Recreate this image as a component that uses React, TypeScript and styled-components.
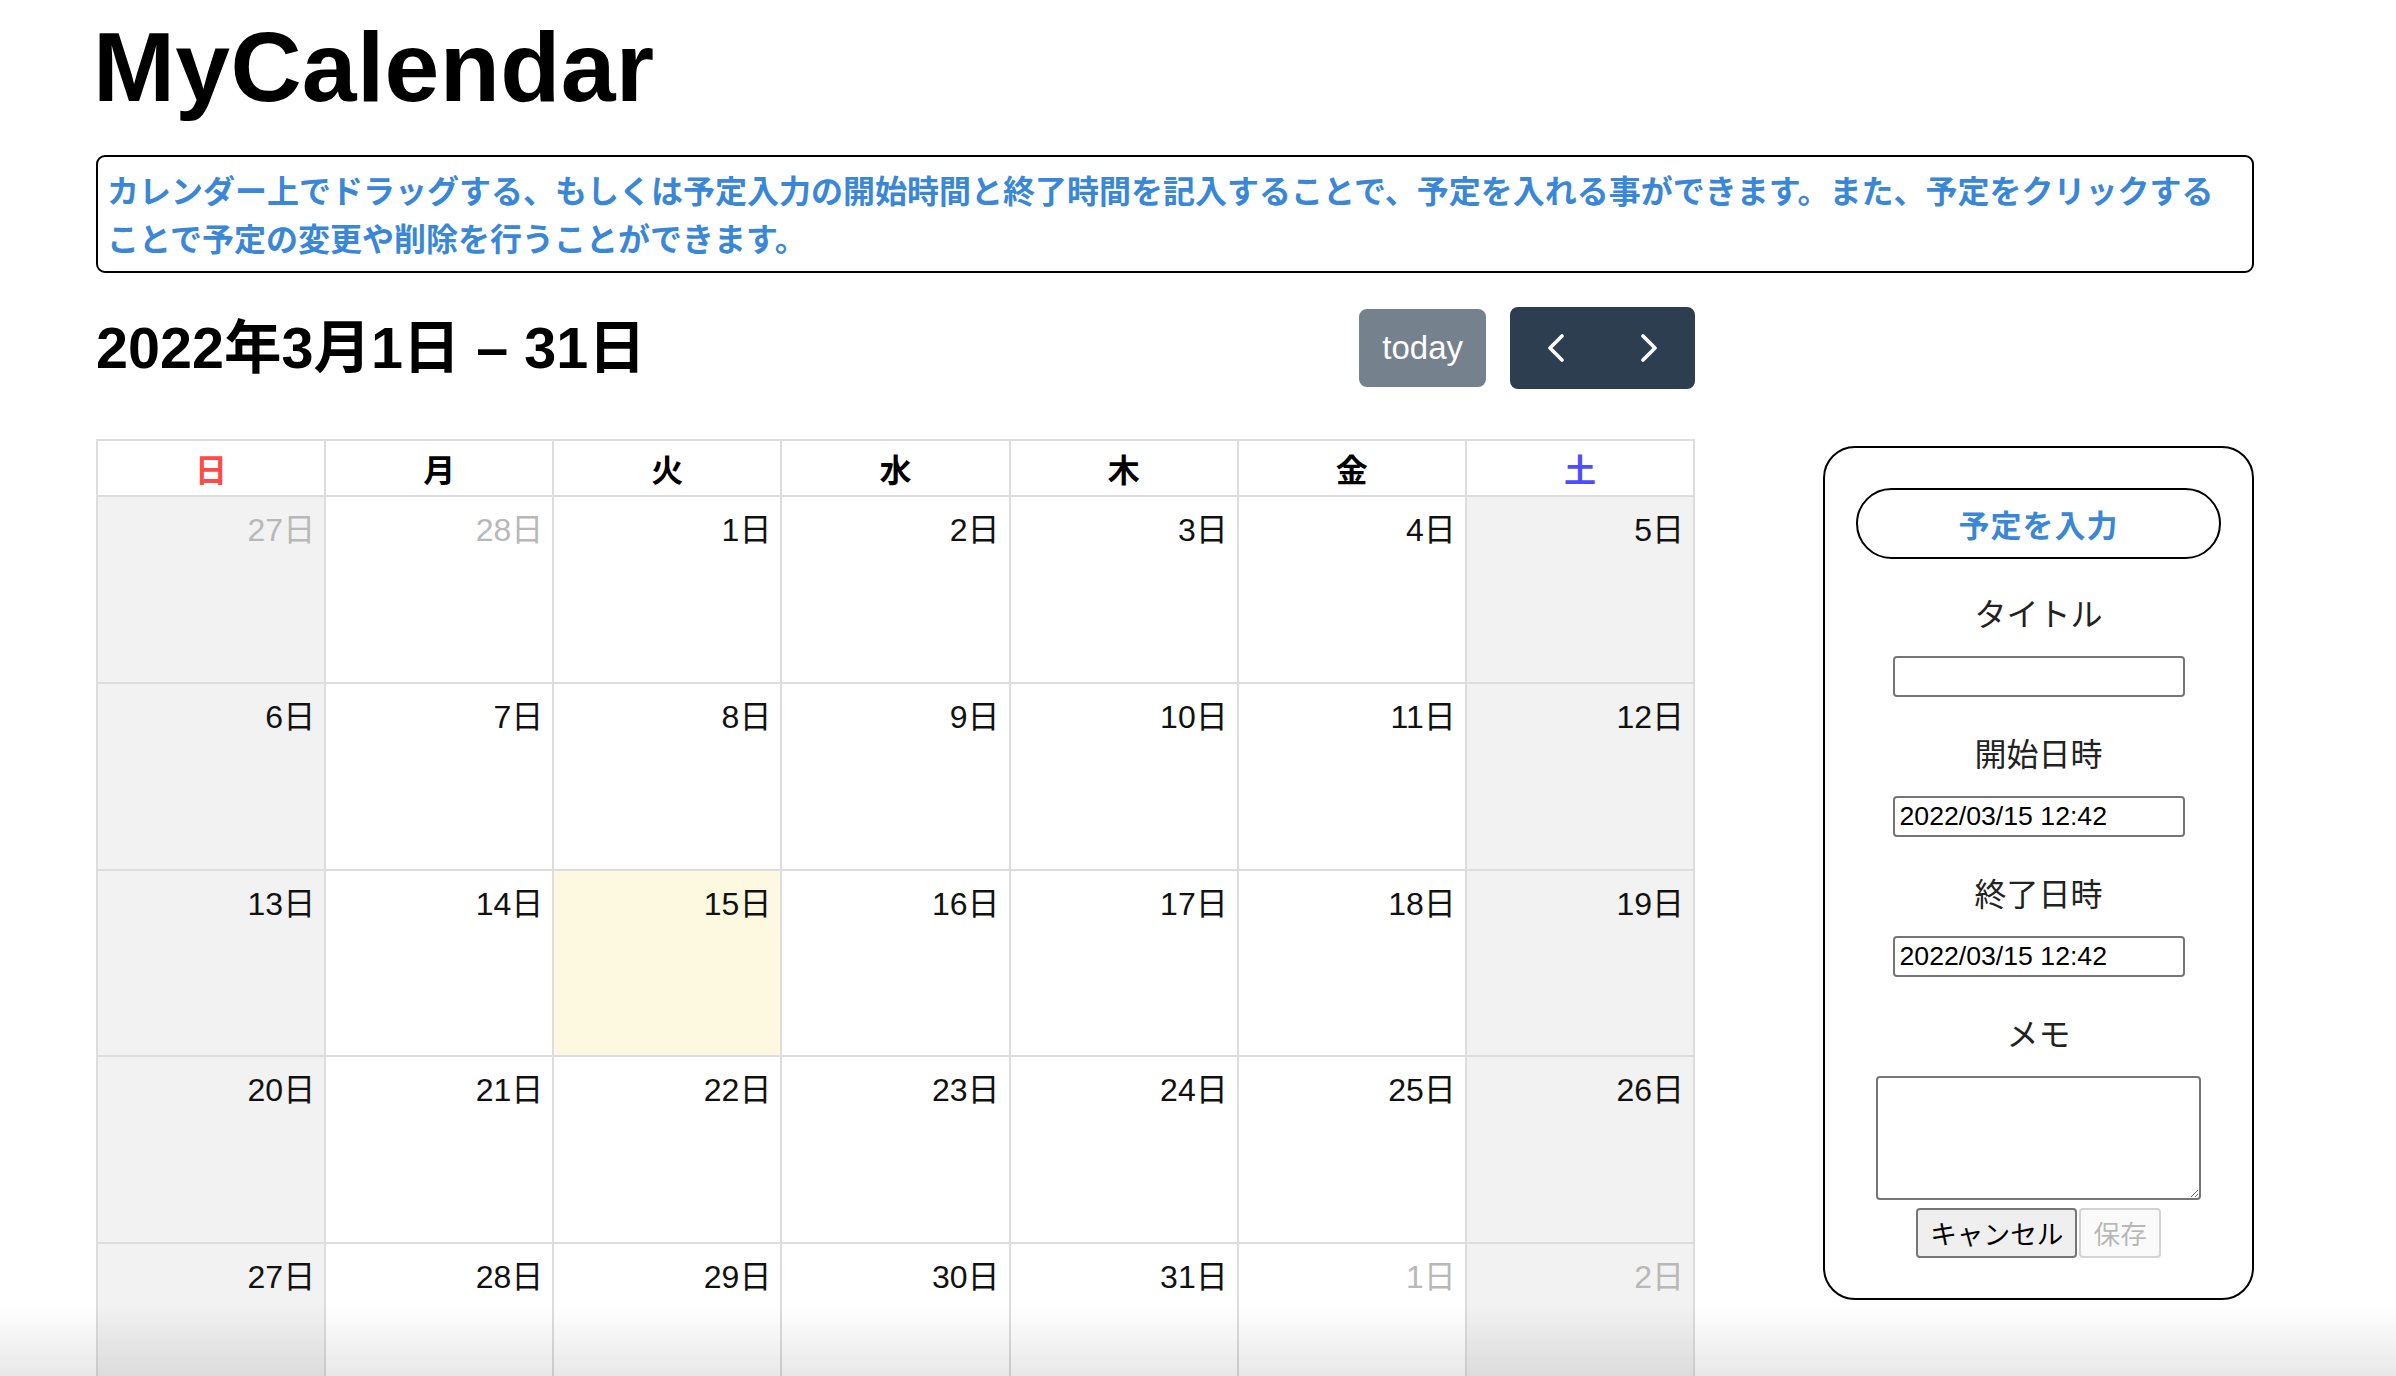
import React from "react";
import styled, { createGlobalStyle } from "styled-components";

const GlobalStyle = createGlobalStyle`
  html, body {
    margin: 0;
    padding: 0;
    background: #ffffff;
  }
  body {
    font-family: "Liberation Sans", "Noto Sans CJK JP", sans-serif;
    color: #000;
  }
  * { box-sizing: border-box; }
`;

const Page = styled.div`
  height: 100vh;
  overflow: hidden;
  padding: 18px 142px 0 96px;
`;

const AppTitle = styled.h1`
  margin: 0 0 0 -3px;
  font-family: "Liberation Sans", sans-serif;
  font-weight: 700;
  font-size: 98.5px;
  line-height: 98px;
  letter-spacing: 0.3px;
  color: #000;
`;

const Notice = styled.div`
  margin-top: 39px;
  border: 2px solid #000;
  border-radius: 9px;
  padding: 8px 9px 10px;
  font-family: "Noto Sans CJK JP", sans-serif;
  font-weight: 700;
  font-size: 32px;
  line-height: 48px;
  color: #3a87d7;
`;

const MainRow = styled.div`
  display: flex;
  align-items: flex-start;
  gap: 128px;
  margin-top: 34px;
`;

const CalendarColumn = styled.section`
  width: 1599px;
  flex: none;
`;

const Toolbar = styled.div`
  display: flex;
  align-items: center;
  justify-content: space-between;
  height: 82px;
  margin-bottom: 50px;
`;

const RangeTitle = styled.h2`
  margin: 0;
  font-family: "Liberation Sans", "Noto Sans CJK JP", sans-serif;
  font-weight: 700;
  font-size: 57.5px;
  line-height: 67px;
`;

const ToolbarButtons = styled.div`
  display: flex;
  align-items: center;
  gap: 24px;
`;

const TodayButton = styled.button`
  height: 78px;
  padding: 0 21px;
  border: 2px solid #2c3e50;
  border-radius: 8px;
  background: #2c3e50;
  opacity: 0.65;
  color: #fff;
  font-family: "Liberation Sans", sans-serif;
  font-size: 33px;
  line-height: 48px;
`;

const NavGroup = styled.div`
  display: flex;
`;

const NavButton = styled.button<{ $side: "left" | "right" }>`
  width: 92.5px;
  height: 82px;
  display: flex;
  align-items: center;
  justify-content: center;
  border: 2px solid #2c3e50;
  background: #2c3e50;
  padding: 0;
  border-radius: ${(p) => (p.$side === "left" ? "8px 0 0 8px" : "0 8px 8px 0")};
`;

const Grid = styled.div`
  display: grid;
  grid-template-columns: repeat(7, 1fr);
  border-top: 2px solid #ddd;
  border-left: 2px solid #ddd;
`;

const HeadCell = styled.div<{ $color: string }>`
  height: 56px;
  display: flex;
  align-items: center;
  justify-content: center;
  border-right: 2px solid #ddd;
  border-bottom: 2px solid #ddd;
  font-family: "Noto Sans CJK JP", sans-serif;
  font-weight: 700;
  font-size: 32px;
  line-height: 48px;
  color: ${(p) => p.$color};
`;

const DayCell = styled.div<{ $bg: string }>`
  height: 186.75px;
  border-right: 2px solid #ddd;
  border-bottom: 2px solid #ddd;
  background: ${(p) => p.$bg};
  display: flex;
  justify-content: flex-end;
  align-items: flex-start;
`;

const DayNumber = styled.span<{ $muted: boolean }>`
  padding: 9px 9px 7px;
  font-family: "Liberation Sans", "Noto Sans CJK JP", sans-serif;
  font-size: 32px;
  line-height: 48px;
  color: ${(p) => (p.$muted ? "#b8b8b8" : "#111")};
`;

const Panel = styled.aside`
  width: 431px;
  flex: none;
  margin-top: 139px;
  border: 2px solid #000;
  border-radius: 32px;
  padding: 40px 31px;
  display: flex;
  flex-direction: column;
  align-items: center;
`;

const EntryButton = styled.button`
  width: 100%;
  height: 71px;
  border: 2px solid #000;
  border-radius: 36px;
  background: #fff;
  color: #3a87d7;
  font-family: "Noto Sans CJK JP", sans-serif;
  font-weight: 700;
  font-size: 31px;
  letter-spacing: 1px;
`;

const FieldLabel = styled.div<{ $top: number }>`
  margin-top: ${(p) => p.$top}px;
  margin-bottom: 20px;
  font-family: "Noto Sans CJK JP", sans-serif;
  font-size: 32px;
  line-height: 48px;
  color: #222;
`;

const TextField = styled.input`
  width: 292px;
  height: 41px;
  border: 2px solid #767676;
  border-radius: 4px;
  padding: 2px 5px;
  font-family: "Liberation Sans", sans-serif;
  font-size: 26.67px;
  color: #000;
  background: #fff;
`;

const MemoField = styled.textarea`
  width: 325px;
  height: 124px;
  margin-top: 0;
  border: 2px solid #767676;
  border-radius: 4px;
  padding: 4px;
  font-family: "Liberation Sans", sans-serif;
  font-size: 26.67px;
  background: #fff;
  resize: both;
`;

const ActionRow = styled.div`
  display: flex;
  gap: 2px;
  margin-top: 8px;
`;

const FormButton = styled.button`
  height: 50px;
  padding: 0 12px;
  border: 2px solid #767676;
  border-radius: 4px;
  background: #efefef;
  color: #000;
  font-family: "Noto Sans CJK JP", sans-serif;
  font-size: 26.67px;
  line-height: 1;
  &:disabled {
    border-color: rgba(118, 118, 118, 0.3);
    background: rgba(239, 239, 239, 0.3);
    color: rgba(16, 16, 16, 0.3);
  }
`;

const BottomFade = styled.div`
  position: fixed;
  left: 0;
  right: 0;
  bottom: 0;
  height: 72px;
  pointer-events: none;
  background: linear-gradient(to bottom, rgba(0, 0, 0, 0), rgba(0, 0, 0, 0.09));
`;

const Chevron = ({ dir }: { dir: "left" | "right" }) => (
  <svg width="18" height="28" viewBox="0 0 18 28" fill="none">
    <polyline
      points={dir === "left" ? "15,2 3,14 15,26" : "3,2 15,14 3,26"}
      stroke="#fff"
      strokeWidth="3.6"
      strokeLinecap="round"
      strokeLinejoin="round"
    />
  </svg>
);

const weekdays = [
  { label: "日", color: "#ff4a4a" },
  { label: "月", color: "#000" },
  { label: "火", color: "#000" },
  { label: "水", color: "#000" },
  { label: "木", color: "#000" },
  { label: "金", color: "#000" },
  { label: "土", color: "#4d4dff" },
];

type Day = { n: number; muted: boolean; today?: boolean };

const buildWeeks = (): Day[][] => {
  const days: Day[] = [
    { n: 27, muted: true },
    { n: 28, muted: true },
  ];
  for (let i = 1; i <= 31; i++) days.push({ n: i, muted: false, today: i === 15 });
  for (let i = 1; i <= 2; i++) days.push({ n: i, muted: true });
  const weeks: Day[][] = [];
  for (let w = 0; w < 5; w++) weeks.push(days.slice(w * 7, w * 7 + 7));
  return weeks;
};

export default function App() {
  const weeks = buildWeeks();
  return (
    <>
      <GlobalStyle />
      <Page>
        <AppTitle>MyCalendar</AppTitle>
        <Notice>
          カレンダー上でドラッグする、もしくは予定入力の開始時間と終了時間を記入することで、予定を入れる事ができます。また、予定をクリックすることで予定の変更や削除を行うことができます。
        </Notice>
        <MainRow>
          <CalendarColumn>
            <Toolbar>
              <RangeTitle>2022年3月1日 – 31日</RangeTitle>
              <ToolbarButtons>
                <TodayButton disabled>today</TodayButton>
                <NavGroup>
                  <NavButton $side="left" aria-label="prev">
                    <Chevron dir="left" />
                  </NavButton>
                  <NavButton $side="right" aria-label="next">
                    <Chevron dir="right" />
                  </NavButton>
                </NavGroup>
              </ToolbarButtons>
            </Toolbar>
            <Grid>
              {weekdays.map((d) => (
                <HeadCell key={d.label} $color={d.color}>
                  {d.label}
                </HeadCell>
              ))}
              {weeks.map((week, wi) =>
                week.map((day, di) => {
                  const weekend = di === 0 || di === 6;
                  const bg = day.today ? "#fdf9e0" : weekend ? "#f2f2f2" : "#ffffff";
                  return (
                    <DayCell key={`${wi}-${di}`} $bg={bg}>
                      <DayNumber $muted={day.muted}>{day.n}日</DayNumber>
                    </DayCell>
                  );
                })
              )}
            </Grid>
          </CalendarColumn>
          <Panel>
            <EntryButton>予定を入力</EntryButton>
            <FieldLabel $top={29}>タイトル</FieldLabel>
            <TextField type="text" defaultValue="" />
            <FieldLabel $top={31}>開始日時</FieldLabel>
            <TextField type="text" defaultValue="2022/03/15 12:42" />
            <FieldLabel $top={31}>終了日時</FieldLabel>
            <TextField type="text" defaultValue="2022/03/15 12:42" />
            <FieldLabel $top={31}>メモ</FieldLabel>
            <MemoField />
            <ActionRow>
              <FormButton>キャンセル</FormButton>
              <FormButton disabled>保存</FormButton>
            </ActionRow>
          </Panel>
        </MainRow>
      </Page>
      <BottomFade />
    </>
  );
}
